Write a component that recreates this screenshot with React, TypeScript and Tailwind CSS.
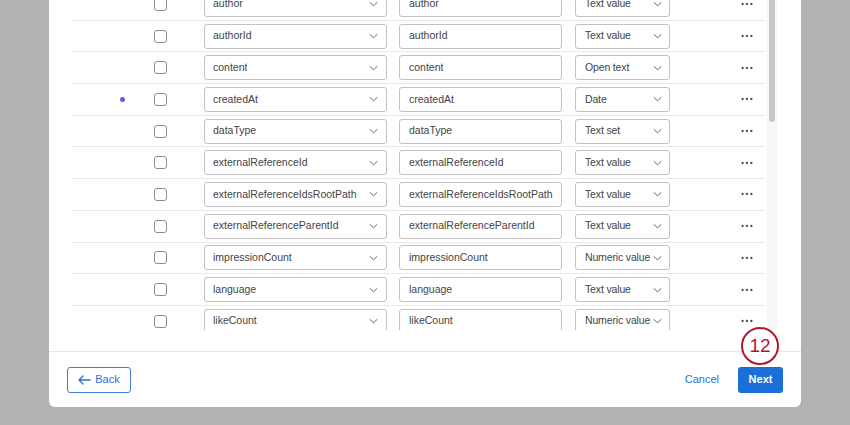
import React from 'react';

type Row = {
  field: string;
  type: string;
  dot?: boolean;
};

const rows: Row[] = [
  { field: 'author', type: 'Text value' },
  { field: 'authorId', type: 'Text value' },
  { field: 'content', type: 'Open text' },
  { field: 'createdAt', type: 'Date', dot: true },
  { field: 'dataType', type: 'Text set' },
  { field: 'externalReferenceId', type: 'Text value' },
  { field: 'externalReferenceIdsRootPath', type: 'Text value' },
  { field: 'externalReferenceParentId', type: 'Text value' },
  { field: 'impressionCount', type: 'Numeric value' },
  { field: 'language', type: 'Text value' },
  { field: 'likeCount', type: 'Numeric value' },
];

function Chevron() {
  return (
    <svg width="9" height="6" viewBox="0 0 9 6" className="shrink-0">
      <path d="M1 1.5l3.5 3.3L8 1.5" fill="none" stroke="#666" strokeWidth="1" strokeLinecap="round" strokeLinejoin="round" />
    </svg>
  );
}

function MoreDots() {
  return (
    <svg width="12" height="4" viewBox="0 0 12 4">
      <circle cx="1.6" cy="2" r="1.15" fill="#4a4a4a" />
      <circle cx="6" cy="2" r="1.15" fill="#4a4a4a" />
      <circle cx="10.4" cy="2" r="1.15" fill="#4a4a4a" />
    </svg>
  );
}

function FieldRow({ row }: { row: Row }) {
  return (
    <div className="flex h-[31.7px] shrink-0 items-center border-b border-[#e8e8e8]">
      <div className="w-[48px] shrink-0" />
      <div className={`h-[5px] w-[5px] shrink-0 rounded-full ${row.dot ? 'bg-[#5b5ee6]' : 'bg-transparent'}`} />
      <div className="ml-[29px] h-[13px] w-[13px] shrink-0 rounded-[3px] border border-[#8c8c8c] bg-white" />
      <div className="ml-[37px] flex h-[25px] w-[183px] shrink-0 items-center justify-between rounded-[3px] border border-[#c2c2c2] bg-white pl-[8px] pr-[8px]">
        <span className="truncate">{row.field}</span>
        <Chevron />
      </div>
      <div className="ml-[12px] flex h-[25px] w-[163px] shrink-0 items-center rounded-[3px] border border-[#c2c2c2] bg-white pl-[9px]">
        <span className="truncate">{row.field}</span>
      </div>
      <div className="ml-[13px] flex h-[25px] w-[95px] shrink-0 items-center justify-between rounded-[3px] border border-[#c2c2c2] bg-white pl-[9px] pr-[7px]">
        <span className="whitespace-nowrap tracking-[-0.15px]">{row.type}</span>
        <Chevron />
      </div>
      <div className="ml-[71px] flex w-[12px] shrink-0 items-center">
        <MoreDots />
      </div>
    </div>
  );
}

export default function App() {
  return (
    <div
      className="relative h-[425px] w-[850px] overflow-hidden bg-[#b3b3b3] bg-[radial-gradient(circle,#a9a9a9_0.8px,transparent_1.2px)] bg-[length:11px_11px] bg-[position:3.5px_3.5px] text-[10.5px] text-[#444]"
      style={{ fontFamily: '"Liberation Sans", Arial, sans-serif' }}
    >
      <div className="ml-[49px] flex h-[407px] w-[752px] flex-col rounded-b-[6px] bg-white">
        {/* body */}
        <div className="h-[351px] shrink-0 pb-[21px]">
          <div className="flex h-[330px] pl-[23px]">
            <div className="h-full w-[693px] overflow-hidden">
              <div className="-mt-[11px] flex flex-col">
                {rows.map((r) => (
                  <FieldRow key={r.field} row={r} />
                ))}
              </div>
            </div>
            <div className="ml-[2px] h-full w-[10px] bg-[#f7f7f7] px-[2px]">
              <div className="h-[122px] w-[6px] rounded-b-full bg-[#c6c6c6]" />
            </div>
          </div>
        </div>

        {/* footer */}
        <div className="relative flex h-[56px] items-center justify-between border-t border-[#e6e6e6] px-[18px]">
          <button className="flex h-[26px] w-[64px] items-center justify-center gap-[4px] rounded-[3px] border border-[#3a7fdc] bg-white text-[11px] font-medium text-[#2a6fd0]">
            <svg width="13" height="10" viewBox="0 0 13 10">
              <path d="M12 5H1.5M5 1L1 5l4 4" fill="none" stroke="#2a6fd0" strokeWidth="1.3" strokeLinecap="round" strokeLinejoin="round" />
            </svg>
            Back
          </button>
          <div className="flex items-center">
            <span className="mr-[19px] text-[11px] font-medium text-[#2a6fd0]">Cancel</span>
            <button className="h-[26px] w-[45px] rounded-[3px] bg-[#1b6fd6] text-[11px] font-bold text-white">Next</button>
          </div>
          <div className="absolute right-[22px] top-[-25px] flex h-[38px] w-[38px] items-center justify-center rounded-full border-[2px] border-[#b1172c] bg-white text-[19px] text-[#b1172c]">
            12
          </div>
        </div>
      </div>
    </div>
  );
}
